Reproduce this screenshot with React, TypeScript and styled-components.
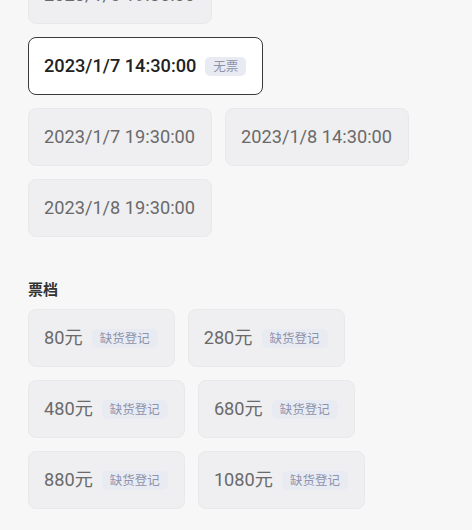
import React from "react";
import styled, { createGlobalStyle } from "styled-components";

const GlobalStyle = createGlobalStyle`
  html, body {
    margin: 0;
    padding: 0;
    background: #f7f7f7;
    font-family: Roboto, "Noto Sans CJK SC", "Noto Sans", sans-serif;
    overflow: hidden;
  }
  * { box-sizing: border-box; }
`;

const Page = styled.div`
  width: 472px;
  height: 530px;
  overflow: hidden;
  padding: 0 28px;
`;

const Content = styled.div`
  margin-top: -34px;
`;

const OptionList = styled.div`
  display: flex;
  flex-wrap: wrap;
  gap: 13px 13px;
`;

const Option = styled.div<{ $selected?: boolean }>`
  height: 58px;
  display: flex;
  align-items: center;
  gap: 9px;
  padding: 0 16px 0 15px;
  border-radius: 8px;
  background: ${(p) => (p.$selected ? "#ffffff" : "#efeff1")};
  border: ${(p) => (p.$selected ? "1.5px solid #3a3a3a" : "1px solid #e9e9ec")};
  color: ${(p) => (p.$selected ? "#222222" : "#6a6a6a")};
  font-size: 18.2px;
  font-weight: ${(p) => (p.$selected ? 500 : 400)};
  line-height: 26px;
  white-space: nowrap;
`;

const Tag = styled.span`
  display: inline-flex;
  align-items: center;
  height: 19px;
  padding: 0 8px;
  border-radius: 5px;
  background: #e9ebf3;
  color: #8d93ab;
  font-size: 12.5px;
  font-weight: 400;
  font-family: "Noto Sans CJK SC", sans-serif;
`;

const SectionLabel = styled.div`
  margin: 42px 0 10px;
  font-size: 15px;
  line-height: 20px;
  font-weight: 700;
  color: #333333;
  font-family: "Noto Sans CJK SC", sans-serif;
`;

const sessions: { time: string; tag?: string; selected?: boolean }[] = [
  { time: "2023/1/6 19:30:00" },
  { time: "2023/1/7 14:30:00", tag: "无票", selected: true },
  { time: "2023/1/7 19:30:00" },
  { time: "2023/1/8 14:30:00" },
  { time: "2023/1/8 19:30:00" },
];

const prices = ["80元", "280元", "480元", "680元", "880元", "1080元"];

export default function App() {
  return (
    <>
      <GlobalStyle />
      <Page>
        <Content>
          <OptionList>
            {sessions.map((s) => (
              <Option key={s.time} $selected={s.selected}>
                {s.time}
                {s.tag && <Tag>{s.tag}</Tag>}
              </Option>
            ))}
          </OptionList>
          <SectionLabel>票档</SectionLabel>
          <OptionList>
            {prices.map((p) => (
              <Option key={p}>
                {p}
                <Tag>缺货登记</Tag>
              </Option>
            ))}
          </OptionList>
        </Content>
      </Page>
    </>
  );
}
